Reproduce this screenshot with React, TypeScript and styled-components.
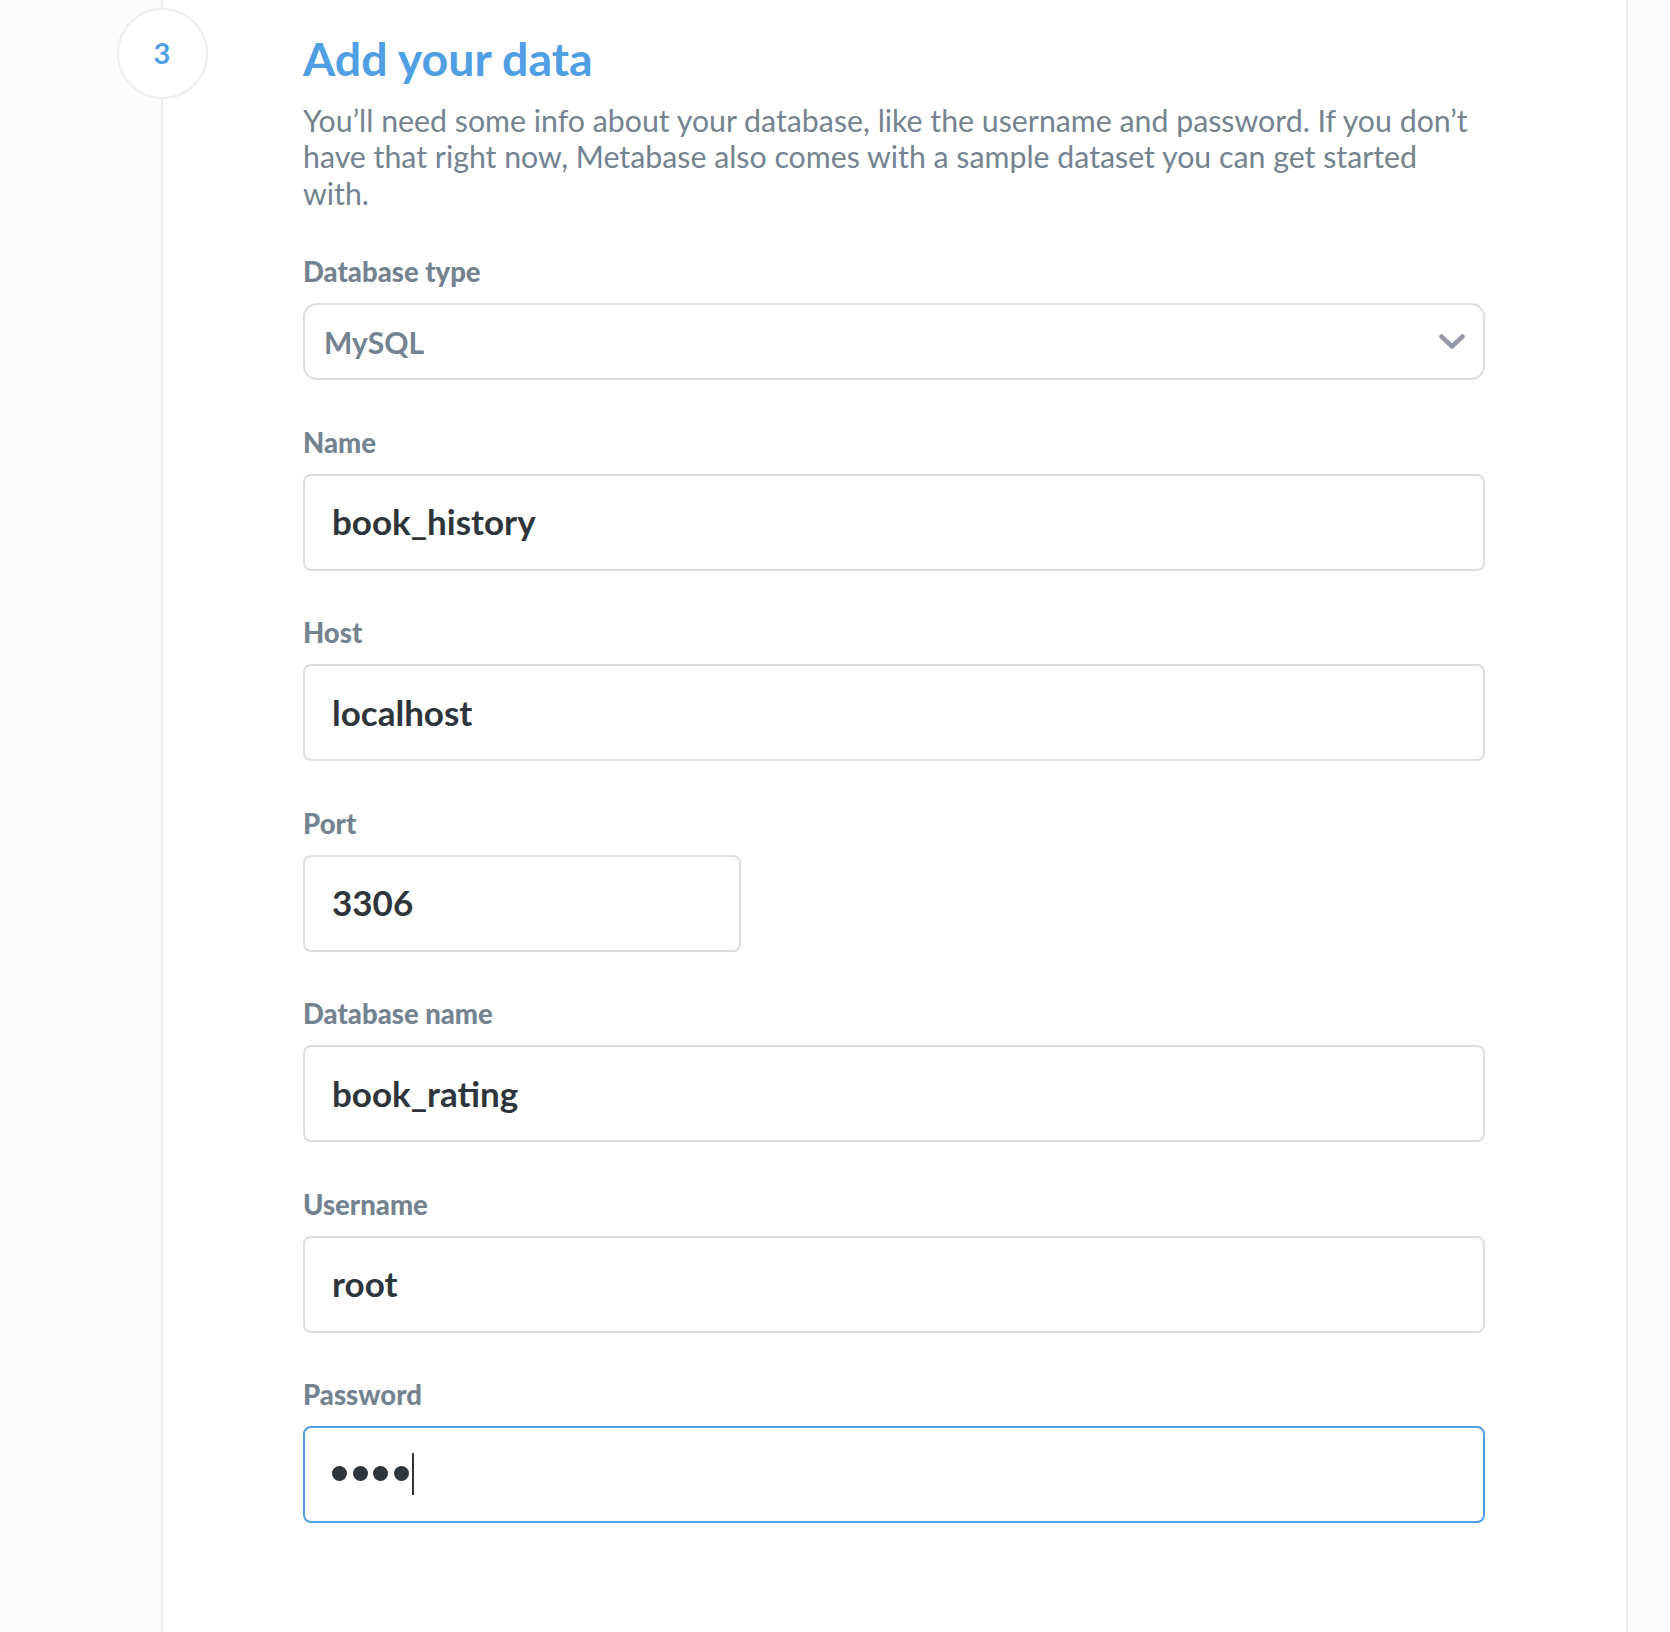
import React from "react";
import styled, { createGlobalStyle } from "styled-components";

const GlobalStyle = createGlobalStyle`
  html, body {
    margin: 0;
    padding: 0;
    background: #ffffff;
  }
  body {
    font-family: Lato, "Noto Sans", "Liberation Sans", sans-serif;
    -webkit-font-smoothing: antialiased;
  }
  * { box-sizing: border-box; }
`;

const Page = styled.div`
  display: flex;
  min-height: 100vh;
  width: 100%;
`;

const Rail = styled.div<{ $width: number; $border?: boolean }>`
  flex: 0 0 ${(p) => p.$width}px;
  background: #f9fbfc;
  border-left: ${(p) => (p.$border ? "2px solid #eeeeee" : "none")};
`;

const Main = styled.main`
  flex: 1 1 auto;
  position: relative;
  background: #ffffff;
  border-left: 2px solid #eeeeee;
  padding: 31px 0 80px 140px;
`;

const StepCircle = styled.div`
  position: absolute;
  left: -46.5px;
  top: 8px;
  width: 91px;
  height: 91px;
  border-radius: 50%;
  border: 2px solid #eeeeee;
  background: #ffffff;
  display: flex;
  align-items: center;
  justify-content: center;
  padding-bottom: 3px;
  color: #509ee3;
  font-size: 29px;
  font-weight: 700;
`;

const Content = styled.div`
  width: 1182px;
  display: flex;
  flex-direction: column;
`;

const Title = styled.h2`
  margin: 0;
  font-size: 46.5px;
  line-height: 1.2;
  font-weight: 700;
  color: #509ee3;
`;

const Description = styled.p`
  margin: 15px 0 45px;
  max-width: 1175px;
  font-size: 30.3px;
  line-height: 36.4px;
  font-weight: 400;
  color: #74838f;
`;

const Field = styled.div`
  display: flex;
  flex-direction: column;
  margin-bottom: 46.5px;
`;

const Label = styled.label`
  font-size: 27.5px;
  line-height: 32px;
  font-weight: 900;
  color: #74838f;
  margin-bottom: 15px;
`;

const SelectBox = styled.div`
  height: 77px;
  border: 2px solid #dcdfe1;
  border-radius: 14px;
  display: flex;
  align-items: center;
  justify-content: space-between;
  padding: 0 18px 0 19px;
  color: #74838f;
  font-size: 30px;
  font-weight: 700;
`;

const InputBox = styled.div<{ $width?: number; $focused?: boolean }>`
  width: ${(p) => (p.$width ? `${p.$width}px` : "100%")};
  height: 97px;
  border: 2px solid ${(p) => (p.$focused ? "#509ee3" : "#dcdfe1")};
  border-radius: 8px;
  display: flex;
  align-items: center;
  padding: 0 27px 2px;
  background: #ffffff;
`;

const InputValue = styled.span`
  font-size: 35px;
  font-weight: 700;
  color: #2e353b;
`;

const Dot = styled.span`
  width: 15px;
  height: 15px;
  border-radius: 50%;
  background: #2e353b;
  margin-right: 5.7px;
  flex: 0 0 auto;
`;

const Caret = styled.span`
  width: 2px;
  height: 42px;
  background: #2e353b;
  margin-left: -3px;
`;

const Chevron = () => (
  <svg width="26" height="16" viewBox="0 0 26 16" fill="none">
    <path d="M2.5 2.5 L13 12.5 L23.5 2.5" stroke="#949aab" strokeWidth="4.5" strokeLinecap="round" strokeLinejoin="round" />
  </svg>
);

const fields: { label: string; value: string; width?: number }[] = [
  { label: "Name", value: "book_history" },
  { label: "Host", value: "localhost" },
  { label: "Port", value: "3306", width: 438 },
  { label: "Database name", value: "book_rating" },
  { label: "Username", value: "root" },
];

export default function App() {
  return (
    <>
      <GlobalStyle />
      <Page>
        <Rail $width={161} />
        <Main>
          <StepCircle>3</StepCircle>
          <Content>
            <Title>Add your data</Title>
            <Description>
              You’ll need some info about your database, like the username and password. If you don’t have that right now, Metabase also comes with a sample dataset you can get started with.
            </Description>
            <Field>
              <Label>Database type</Label>
              <SelectBox>
                <span>MySQL</span>
                <Chevron />
              </SelectBox>
            </Field>
            {fields.map((f) => (
              <Field key={f.label}>
                <Label>{f.label}</Label>
                <InputBox $width={f.width}>
                  <InputValue>{f.value}</InputValue>
                </InputBox>
              </Field>
            ))}
            <Field>
              <Label>Password</Label>
              <InputBox $focused>
                <Dot />
                <Dot />
                <Dot />
                <Dot />
                <Caret />
              </InputBox>
            </Field>
          </Content>
        </Main>
        <Rail $width={44} $border />
      </Page>
    </>
  );
}
